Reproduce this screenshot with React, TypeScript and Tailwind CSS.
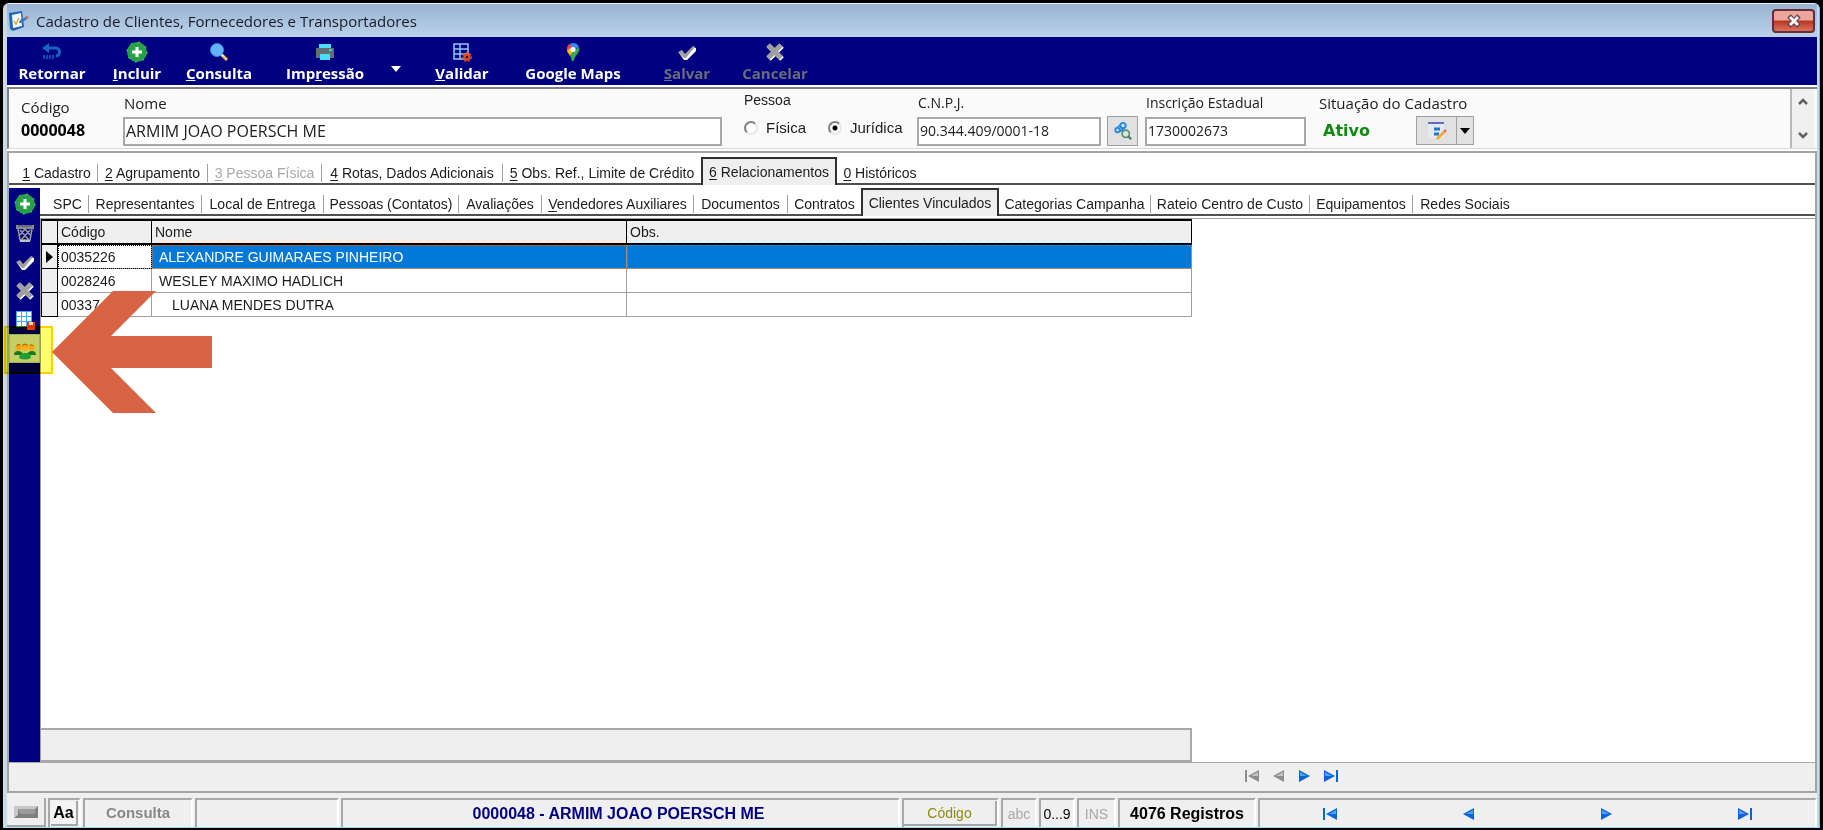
import clsx from "clsx"
import type { ReactNode } from "react"

type Tab = { key?: string; label: string; width: string; disabled?: boolean }

const mainTabs: Tab[] = [
  { key: "1", label: " Cadastro", width: "w-[82px]" },
  { key: "2", label: " Agrupamento", width: "w-[110px]" },
  { key: "3", label: " Pessoa Física", width: "w-[114px]", disabled: true },
  { key: "4", label: " Rotas, Dados Adicionais", width: "w-[181px]" },
  { key: "5", label: " Obs. Ref., Limite de Crédito", width: "w-[198px]" },
  { key: "6", label: " Relacionamentos", width: "w-[136px]" },
  { key: "0", label: " Históricos", width: "w-[86px]" },
]

const subTabs: Tab[] = [
  { label: "SPC", width: "w-[42px]" },
  { label: "Representantes", width: "w-[113px]" },
  { label: "Local de Entrega", width: "w-[122px]" },
  { label: "Pessoas (Contatos)", width: "w-[135px]" },
  { label: "Avaliações", width: "w-[83px]" },
  { key: "V", label: "endedores Auxiliares", width: "w-[152px]" },
  { label: "Documentos", width: "w-[94px]" },
  { label: "Contratos", width: "w-[73px]" },
  { label: "Clientes Vinculados", width: "w-[138px]" },
  { label: "Categorias Campanha", width: "w-[152px]" },
  { label: "Rateio Centro de Custo", width: "w-[159px]" },
  { label: "Equipamentos", width: "w-[103px]" },
  { label: "Redes Sociais", width: "w-[104px]" },
]

const rows = [
  { code: "0035226", name: "ALEXANDRE GUIMARAES PINHEIRO", level: 0 },
  { code: "0028246", name: "WESLEY MAXIMO HADLICH", level: 0 },
  { code: "0033746", name: "LUANA MENDES DUTRA", level: 1 },
]

function FormIcon() {
  return (
    <svg width="20" height="20" viewBox="0 0 20 20" aria-hidden="true">
      <path d="M0 2l13-2 2 16-11 4-3-2z" fill="#1f66b8" />
      <path d="M3 4l9-2 1 13-9 2z" fill="#f4f8fd" />
      <path d="M5 10l2 3 3-6" fill="none" stroke="#d8b040" strokeWidth="1.6" />
      <path d="M10 12l1-3 6-3 1 2-6 4z" fill="#3a78c0" />
      <path d="M16 6l2-1 2 2-3 1z" fill="#c96050" />
    </svg>
  )
}

function BackIcon() {
  return (
    <svg width="20" height="20" viewBox="0 0 20 20" aria-hidden="true">
      <path d="M4 6h9a4 4 0 0 1 1 8" fill="none" stroke="#1565c0" strokeWidth="3" />
      <path d="M0 6l7-5v10z" fill="#1565c0" />
      <path d="M2 13v4M5 13v4M8 13v4M11 13v4" stroke="#1565c0" strokeWidth="1.5" />
    </svg>
  )
}

function PlusIcon() {
  return (
    <svg width="22" height="22" viewBox="0 0 22 22" aria-hidden="true">
      <circle cx="11" cy="11" r="10" fill="#25a244" />
      <circle cx="11" cy="11" r="10" fill="none" stroke="#8fd0a4" strokeDasharray="2 6" />
      <path d="M11 6v10M6 11h10" stroke="#fff" strokeWidth="3" />
    </svg>
  )
}

function SearchIcon() {
  return (
    <svg width="20" height="20" viewBox="0 0 20 20" aria-hidden="true">
      <path d="M12 12l6 6" stroke="#f2c66c" strokeWidth="3" />
      <path d="M11 11l3 3" stroke="#e8e8e8" strokeWidth="2" />
      <circle cx="8" cy="8" r="6.5" fill="#64b5f6" stroke="#3f86d8" />
    </svg>
  )
}

function PrinterIcon() {
  return (
    <svg width="20" height="18" viewBox="0 0 20 18" aria-hidden="true">
      <path d="M4 1h12v5H4z" fill="#4ddcf8" />
      <path d="M1 5h18v10H1z" fill="#616e78" />
      <path d="M14 7h3" stroke="#4ddcf8" strokeWidth="1.5" />
      <path d="M5 11h10v6H5z" fill="#4ddcf8" />
    </svg>
  )
}

function GridGearIcon() {
  return (
    <svg width="20" height="20" viewBox="0 0 20 20" aria-hidden="true">
      <path d="M2 2h14v15H2zM2 7h14M2 12h14M8 2v15" fill="none" stroke="#90caf9" strokeWidth="1.5" />
      <circle cx="15" cy="15" r="2.5" fill="#000080" stroke="#e64a19" strokeWidth="2.4" />
      <circle cx="15" cy="15" r="4.2" fill="none" stroke="#e64a19" strokeWidth="1.5" strokeDasharray="2 1.6" />
    </svg>
  )
}

function MapsIcon() {
  return (
    <svg width="16" height="20" viewBox="0 0 16 20" aria-hidden="true">
      <path d="M8 1a6.5 6.5 0 0 1 6 4L8 8 4 3a6 6 0 0 1 4-2z" fill="#4285f4" />
      <path d="M4 2L8 7 3 11A7 7 0 0 1 4 2z" fill="#ea4335" />
      <path d="M2 9l3-3 3 5-3 3z" fill="#fbbc04" />
      <path d="M14 5c2 6-5 8-5 14H7l-2-6 6-6z" fill="#34a853" />
      <circle cx="8" cy="7.5" r="2.6" fill="#fff" />
    </svg>
  )
}

function CheckIcon() {
  return (
    <svg width="20" height="20" viewBox="0 0 20 20" aria-hidden="true">
      <path d="M2 11l3-2 3 4 8-8 3 1v3l-9 9-3 0z" fill="#fff" />
      <path d="M1 10l4-2 3 4 8-8 2 1-9 11H7z" fill="#a0a0a0" />
    </svg>
  )
}

function CrossIcon() {
  return (
    <svg width="20" height="20" viewBox="0 0 20 20" aria-hidden="true">
      <path d="M4 4l13 13M17 4L4 17" stroke="#fff" strokeWidth="5" />
      <path d="M3 3l13 13M16 3L3 16" stroke="#a0a0a0" strokeWidth="5" />
    </svg>
  )
}

function TrashIcon() {
  return (
    <svg width="20" height="20" viewBox="0 0 20 20" aria-hidden="true">
      <path d="M1 2h18v4H1z" fill="#8a8a8a" />
      <path d="M3 3h14" stroke="#4a4a70" />
      <path d="M3 6l2 11h10l2-11M5 7l9 10M15 7L6 17M10 6l5 6M10 6l-5 6" fill="none" stroke="#9a9a9a" strokeWidth="1.5" />
      <path d="M5 18h10" stroke="#c0c0c0" strokeWidth="2" />
    </svg>
  )
}

function GridSaveIcon() {
  return (
    <svg width="20" height="20" viewBox="0 0 20 20" aria-hidden="true">
      <path d="M1 1h16v16H1z" fill="#42a5f5" />
      <path
        d="M2 2h4v4h-4zM7 2h4v4h-4zM12 2h4v4h-4zM2 7h4v4h-4zM7 7h4v4h-4zM12 7h4v4h-4zM2 12h4v4h-4zM7 12h4v4h-4z"
        fill="#fff"
      />
      <path d="M12 12h8v8h-8z" fill="#e53920" />
      <path d="M14 12h4v3h-4z" fill="#ffe0a0" />
    </svg>
  )
}

function PeopleIcon() {
  return (
    <svg width="22" height="18" viewBox="0 0 22 18" className="mt-1" aria-hidden="true">
      <path d="M0 13q0-4 4-4t5 4zM13 13q1-4 5-4t4 4z" fill="#187848" />
      <circle cx="4.5" cy="5.5" r="3" fill="#ffa21a" />
      <circle cx="17.5" cy="5.5" r="3" fill="#ffa21a" />
      <path d="M2 4q2-4 5-1M15 3q3-2 5 1M8 3q3-3 6 0v2H8z" fill="#b46a00" />
      <circle cx="11" cy="6" r="3" fill="#ffb030" />
      <path d="M5 16q0-5 6-5t6 5q-6 3-12 0z" fill="#20a070" />
    </svg>
  )
}

function LinkSearchIcon() {
  return (
    <svg width="20" height="20" viewBox="0 0 22 22" aria-hidden="true">
      <g fill="none" stroke="#1e88e5" strokeWidth="2">
        <circle cx="5" cy="10" r="2.5" />
        <circle cx="11" cy="5" r="3" />
        <path d="M5 7l4-3M7 11q4 0 4-3" />
      </g>
      <circle cx="14" cy="14" r="4" fill="#d4e8e0" stroke="#5a8c70" strokeWidth="1.8" />
      <path d="M17 17l3 3" stroke="#4a7860" strokeWidth="2.4" />
    </svg>
  )
}

function EditListIcon() {
  return (
    <svg width="20" height="20" viewBox="0 0 20 20" aria-hidden="true">
      <path d="M1 2h16v15H1z" fill="#e4eaf2" />
      <path d="M1 2h16" stroke="#3f51b5" strokeWidth="1.6" />
      <path d="M7 8h6M7 13h5" stroke="#1976d2" strokeWidth="3" />
      <path d="M10 18l7-7" stroke="#ffa726" strokeWidth="2.8" />
      <path d="M17 11l2-2" stroke="#e57373" strokeWidth="2.8" />
    </svg>
  )
}

type Direction = "first" | "previous" | "next" | "last"

function NavButton({ to, disabled }: { to: Direction; disabled?: boolean }) {
  const back = to === "first" || to === "previous"
  const edge = to === "first" || to === "last"
  const dark = disabled ? "#8c8c8c" : "#0a63d8"
  const light = disabled ? "#c4c4c4" : "#4aa4ff"

  return (
    <button type="button" aria-label={to} disabled={disabled} className="flex h-5 items-center justify-center">
      <svg
        width={edge ? 16 : 12}
        height="12"
        viewBox={edge ? "0 0 16 12" : "0 0 12 12"}
        className={clsx(back && "-scale-x-100")}
        aria-hidden="true"
      >
        <path d="M1 0l11 6-11 6z" fill={dark} />
        <path d="M2 2l7 4H2z" fill={light} />
        {edge && <path d="M14 0v12" stroke={dark} strokeWidth="2" />}
      </svg>
    </button>
  )
}

function ToolButton({
  icon,
  width,
  disabled,
  children,
}: {
  icon: ReactNode
  width: string
  disabled?: boolean
  children: ReactNode
}) {
  return (
    <button
      type="button"
      disabled={disabled}
      className={clsx(
        "flex flex-none flex-col items-center font-['Open_Sans',sans-serif] text-[15px] leading-5 font-bold whitespace-nowrap",
        disabled ? "text-[#6c6c78]" : "text-white",
        width
      )}
    >
      <span className="flex h-[22px] items-center">{icon}</span>
      <span>{children}</span>
    </button>
  )
}

function TabBar({ tabs, active, label }: { tabs: Tab[]; active: number; label: string }) {
  return (
    <div
      role="tablist"
      aria-label={label}
      className="flex items-end border-b-2 border-[#505050] pl-[7px] text-sm leading-5 text-[#1c1c1c]"
    >
      {tabs.map((tab, index) => (
        <button
          key={tab.label}
          type="button"
          role="tab"
          aria-selected={index === active}
          disabled={tab.disabled}
          className={clsx(
            "flex flex-none items-center justify-center whitespace-pre",
            tab.width,
            tab.disabled && "text-[#a8a8a8]",
            index === active
              ? "-mb-0.5 h-7 border-2 border-b-0 border-[#303030] bg-[#efefef]"
              : "h-[26px] pt-1.5"
          )}
        >
          <span className="flex-1">
            {tab.key && <u className="underline-offset-2">{tab.key}</u>}
            {tab.label}
          </span>
          {index !== active && index !== active - 1 && index !== tabs.length - 1 && (
            <span className="h-[18px] w-px bg-[#a0a0a0]" />
          )}
        </button>
      ))}
    </div>
  )
}

function SideButton({ label, children }: { label: string; children: ReactNode }) {
  return (
    <button type="button" aria-label={label} className="flex h-[29px] w-full items-center justify-center">
      {children}
    </button>
  )
}

function Sidebar() {
  return (
    <aside className="w-[31px] flex-none bg-[#000080] pt-px">
      <SideButton label="Incluir">
        <PlusIcon />
      </SideButton>
      <SideButton label="Excluir">
        <TrashIcon />
      </SideButton>
      <SideButton label="Salvar">
        <CheckIcon />
      </SideButton>
      <SideButton label="Cancelar">
        <CrossIcon />
      </SideButton>
      <SideButton label="Salvar grade">
        <GridSaveIcon />
      </SideButton>
      <div className="relative">
        <button
          type="button"
          aria-label="Vincular clientes"
          className="flex h-[29px] w-full items-center justify-center border border-[#9db4e0] bg-[#c6cfe8]"
        >
          <PeopleIcon />
        </button>
        {/* Callout over the button */}
        <div className="pointer-events-none absolute -top-2 -left-[5px] h-12 w-[49px] border-2 border-[#ffd000] bg-[#ffff70] mix-blend-multiply" />
        <svg
          className="pointer-events-none absolute -top-11 left-[43px] z-10"
          width="161"
          height="124"
          viewBox="0 0 161 124"
          aria-hidden="true"
        >
          <path d="M0 62L61 1h43L59 46h101v32H59l45 45H61z" fill="#d96445" />
        </svg>
      </div>
    </aside>
  )
}

function ClientTable() {
  const head = "border-b-2 border-r border-black bg-[#efefef] px-[3px] text-left font-normal"
  return (
    <table className="w-[1151px] table-fixed border-separate border-spacing-0 border-t-2 border-l border-black text-sm leading-5 text-[#1c1c1c]">
      <thead>
        <tr className="h-6">
          <th className={clsx(head, "w-4")} aria-label="Linha atual" />
          <th className={clsx(head, "w-[94px]")}>Código</th>
          <th className={clsx(head, "w-[475px]")}>Nome</th>
          <th className={head}>Obs.</th>
        </tr>
      </thead>
      <tbody>
        {rows.map((row, index) => {
          const selected = index === 0
          const cell = clsx(
            "border-r border-b border-[#a0a0a0]",
            selected && "bg-[#0078d7] text-white outline-1 -outline-offset-1 outline-dotted outline-[#b87840]"
          )
          return (
            <tr key={row.code} className="h-6" aria-selected={selected}>
              <td className="border-r border-b border-black bg-[#efefef]">
                {selected && (
                  <svg width="7" height="12" viewBox="0 0 7 12" className="mx-auto" aria-hidden="true">
                    <path d="M0 0l7 6-7 6z" />
                  </svg>
                )}
              </td>
              <td
                className={clsx(
                  "border-r border-b border-[#a0a0a0] px-[3px]",
                  selected && "outline-1 -outline-offset-1 outline-dotted outline-black"
                )}
              >
                {row.code}
              </td>
              <td className={clsx(cell, row.level ? "pl-5" : "pl-[7px]")}>{row.name}</td>
              <td className={cell} />
            </tr>
          )
        })}
      </tbody>
    </table>
  )
}

function Field({ id, label, value, width }: { id: string; label: string; value: string; width: string }) {
  const wide = id === "nome"
  return (
    <div className={clsx("flex-none pt-0.5", width)}>
      <label htmlFor={id} className={clsx("block h-[26px] pl-px leading-6", wide ? "text-[15px]" : "text-sm")}>
        {label}
      </label>
      <input
        id={id}
        defaultValue={value}
        className={clsx(
          "block h-[29px] w-full border-2 border-[#a8a8a8] bg-white px-px pb-0.5 text-[#202020] outline-none",
          wide ? "text-base" : "text-sm"
        )}
      />
    </div>
  )
}

function Radio({ label, checked }: { label: string; checked?: boolean }) {
  return (
    <label className="flex items-center gap-2">
      <input
        type="radio"
        name="pessoa"
        defaultChecked={checked}
        className="h-[14px] w-[14px] appearance-none rounded-full border-2 border-t-[#808080] border-r-[#e8e8e8] border-b-[#e8e8e8] border-l-[#808080] bg-white checked:bg-[radial-gradient(circle,#000_2px,transparent_3px)]"
      />
      {label}
    </label>
  )
}

function CustomerForm() {
  return (
    <form className="flex h-[62px] border-t-2 border-b border-l-2 border-t-[#808080] border-b-[#d8d8d8] border-l-[#808080] bg-[#fafafa] font-['Open_Sans',sans-serif] text-[#202020]">
      <div className="w-[114px] flex-none pt-1.5 pl-3">
        <p className="text-[15px] leading-6">Código</p>
        <p className="text-base leading-[22px] font-bold text-black">0000048</p>
      </div>
      <Field id="nome" label="Nome" value="ARMIM JOAO POERSCH ME" width="w-[599px]" />
      <fieldset className="ml-[22px] w-[173px] flex-none font-['Liberation_Sans',sans-serif] text-sm">
        <legend className="float-left h-[29px] w-full leading-[22px]">Pessoa</legend>
        <div className="flex clear-both gap-[22px] text-[15px] leading-5">
          <Radio label="Física" />
          <Radio label="Jurídica" checked />
        </div>
      </fieldset>
      <Field id="cnpj" label="C.N.P.J." value="90.344.409/0001-18" width="w-[184px]" />
      <button
        type="button"
        aria-label="Consultar C.N.P.J."
        className="mt-[27px] ml-1.5 flex h-[30px] w-[31px] flex-none items-center justify-center border border-[#a0a0a0] bg-[#e1e1e1]"
      >
        <LinkSearchIcon />
      </button>
      <div className="w-[7px] flex-none" />
      <Field id="ie" label="Inscrição Estadual" value="1730002673" width="w-[161px]" />
      <div className="ml-[13px] flex-none pt-0.5">
        <p className="text-[15px] leading-6">Situação do Cadastro</p>
        <div className="mt-px flex h-[29px] items-center">
          <output className="w-[97px] pl-1 font-['DejaVu_Sans',sans-serif] text-base font-bold text-[#118a11]">
            Ativo
          </output>
          <button
            type="button"
            aria-label="Alterar situação"
            className="flex h-[29px] w-[41px] items-center justify-center border border-[#a0a0a0] bg-[#e1e1e1]"
          >
            <EditListIcon />
          </button>
          <button
            type="button"
            aria-label="Mais opções"
            className="-ml-px flex h-[29px] w-[18px] items-center justify-center border border-[#a0a0a0] bg-[#e1e1e1]"
          >
            <svg width="10" height="6" viewBox="0 0 10 6" aria-hidden="true">
              <path d="M0 0h10L5 6z" />
            </svg>
          </button>
        </div>
      </div>
      <div className="mr-[3px] ml-auto flex w-6 flex-none flex-col items-center justify-between border-l-2 border-[#b8b8b8] bg-[#f0f0f0] py-2">
        <svg width="10" height="8" viewBox="0 0 10 8" aria-hidden="true">
          <path d="M1 7l4-4 4 4" fill="none" stroke="#606060" strokeWidth="2.5" />
        </svg>
        <svg width="10" height="8" viewBox="0 0 10 8" aria-hidden="true">
          <path d="M1 1l4 4 4-4" fill="none" stroke="#606060" strokeWidth="2.5" />
        </svg>
      </div>
    </form>
  )
}

function Toolbar() {
  return (
    <div role="toolbar" className="flex h-12 bg-[#000080] pt-1">
      <ToolButton icon={<BackIcon />} width="w-[90px]">
        Retornar
      </ToolButton>
      <ToolButton icon={<PlusIcon />} width="w-20">
        <u>I</u>ncluir
      </ToolButton>
      <ToolButton icon={<SearchIcon />} width="w-[84px]">
        <u>C</u>onsulta
      </ToolButton>
      <ToolButton icon={<PrinterIcon />} width="w-32">
        Imp<u>r</u>essão
      </ToolButton>
      <button type="button" aria-label="Opções de impressão" className="flex w-[14px] justify-center pt-[25px]">
        <svg width="10" height="6" viewBox="0 0 10 6" aria-hidden="true">
          <path d="M0 0h10L5 6z" fill="#fff" />
        </svg>
      </button>
      <ToolButton icon={<GridGearIcon />} width="w-[118px]">
        <u>V</u>alidar
      </ToolButton>
      <ToolButton icon={<MapsIcon />} width="w-[104px]">
        Google Maps
      </ToolButton>
      <ToolButton icon={<CheckIcon />} width="w-[124px]" disabled>
        <u>S</u>alvar
      </ToolButton>
      <ToolButton icon={<CrossIcon />} width="w-[52px]" disabled>
        Cancelar
      </ToolButton>
    </div>
  )
}

function StatusPanel({ className, children }: { className?: string; children?: ReactNode }) {
  return (
    <div
      className={clsx(
        "flex h-[29px] items-center justify-center border-t-2 border-r-2 border-l-2 border-t-[#a8a8a8] border-r-white border-l-[#a8a8a8] whitespace-nowrap",
        className
      )}
    >
      {children}
    </div>
  )
}

function StatusBar() {
  return (
    <footer className="flex gap-0.5 bg-[#efefef] pt-[5px] text-base">
      <div className="flex h-[29px] w-[39px] flex-none items-center justify-center border-r-2 border-b-2 border-[#a8a8a8]">
        <svg width="24" height="12" viewBox="0 0 24 12" aria-hidden="true">
          <path d="M0 0h24v12H0z" fill="#808080" />
          <path d="M0 0h24l-3 3H4v6l-4 3z" fill="#c8c8c8" />
          <path d="M4 3h17v5H6z" fill="#9a9a9a" />
        </svg>
      </div>
      <StatusPanel className="w-[33px] flex-none">
        <button type="button" className="h-[25px] w-[27px] border-r-2 border-b-2 border-[#a8a8a8] bg-[#f4f4f4] font-bold">
          Aa
        </button>
      </StatusPanel>
      <StatusPanel className="w-[110px] flex-none text-[15px] font-bold text-[#888]">Consulta</StatusPanel>
      <StatusPanel className="w-36 flex-none" />
      <StatusPanel className="w-[559px] flex-none pr-1 font-bold text-[#000080]">
        0000048 - ARMIM JOAO POERSCH ME
      </StatusPanel>
      <StatusPanel className="w-[97px] flex-none">
        <button type="button" className="h-[25px] w-full border-r-2 border-b-2 border-[#a8a8a8] text-sm text-[#8c8c10]">
          Código
        </button>
      </StatusPanel>
      <StatusPanel className="w-9 flex-none text-sm text-[#a8a8a8]">abc</StatusPanel>
      <StatusPanel className="w-9 flex-none text-sm">0...9</StatusPanel>
      <StatusPanel className="w-[39px] flex-none text-sm text-[#a8a8a8]">INS</StatusPanel>
      <StatusPanel className="w-[138px] flex-none font-bold">4076 Registros</StatusPanel>
      <StatusPanel className="flex-1">
        <div className="flex flex-1 justify-around">
          <NavButton to="first" />
          <NavButton to="previous" />
          <NavButton to="next" />
          <NavButton to="last" />
        </div>
      </StatusPanel>
    </footer>
  )
}

export default function App() {
  return (
    <div className="flex min-h-screen bg-black px-[3px] pt-[3px] pb-0.5 font-['Liberation_Sans',sans-serif]">
      <div className="flex flex-1 flex-col rounded-t-md border-t border-r border-b border-l-2 border-t-[#e8f0f8] border-r-[#58c8e8] border-b-[#a0d8f0] border-l-[#d8d8d8] bg-[#c4d8ee] px-0.5">
        <header className="flex h-[33px] items-center bg-linear-to-b from-[#99b4d1] to-[#bad1ea] pl-0.5">
          <FormIcon />
          <h1 className="ml-[7px] font-['Open_Sans',sans-serif] text-[15px] leading-6 text-[#1a1a28]">
            Cadastro de Clientes, Fornecedores e Transportadores
          </h1>
          <button
            type="button"
            aria-label="Fechar"
            className="mr-0.5 ml-auto flex h-6 w-[43px] items-center justify-center rounded-sm border-2 border-[#6a2c38] bg-linear-to-b from-[#eba79c] from-45% via-[#b83420] via-50% to-[#d8745c]"
          >
            <svg width="16" height="14" viewBox="0 0 16 14" aria-hidden="true">
              <path d="M3 2l10 10M13 2L3 12" stroke="#5a4050" strokeWidth="5" />
              <path d="M4 3l8 8M12 3l-8 8" stroke="#f4f4f4" strokeWidth="3" />
            </svg>
          </button>
        </header>
        <Toolbar />
        <main className="flex flex-1 flex-col bg-white pt-0.5">
          <CustomerForm />
          <section className="mt-0.5 flex flex-1 flex-col border-2 border-[#a4a4a4] pt-1">
            <TabBar tabs={mainTabs} active={5} label="Cadastro" />
            <div className="flex flex-1 pt-[3px]">
              <Sidebar />
              <div className="flex flex-1 flex-col">
                <TabBar tabs={subTabs} active={8} label="Relacionamentos" />
                <div className="mt-0.5 flex flex-1 flex-col border-t border-l border-[#a0a0a0]">
                  <ClientTable />
                  <div className="mt-auto h-[34px] w-[1151px] border-2 border-l-0 border-[#a8a8a8] bg-[#efefef]" />
                </div>
              </div>
            </div>
            <div className="flex h-[29px] items-center border-t border-[#a8a8a8] bg-[#efefef] pb-0.5 pl-[1235px]">
              <div className="flex gap-[13px]">
                <NavButton to="first" disabled />
                <NavButton to="previous" disabled />
                <NavButton to="next" />
                <NavButton to="last" />
              </div>
            </div>
          </section>
        </main>
        <StatusBar />
      </div>
    </div>
  )
}
